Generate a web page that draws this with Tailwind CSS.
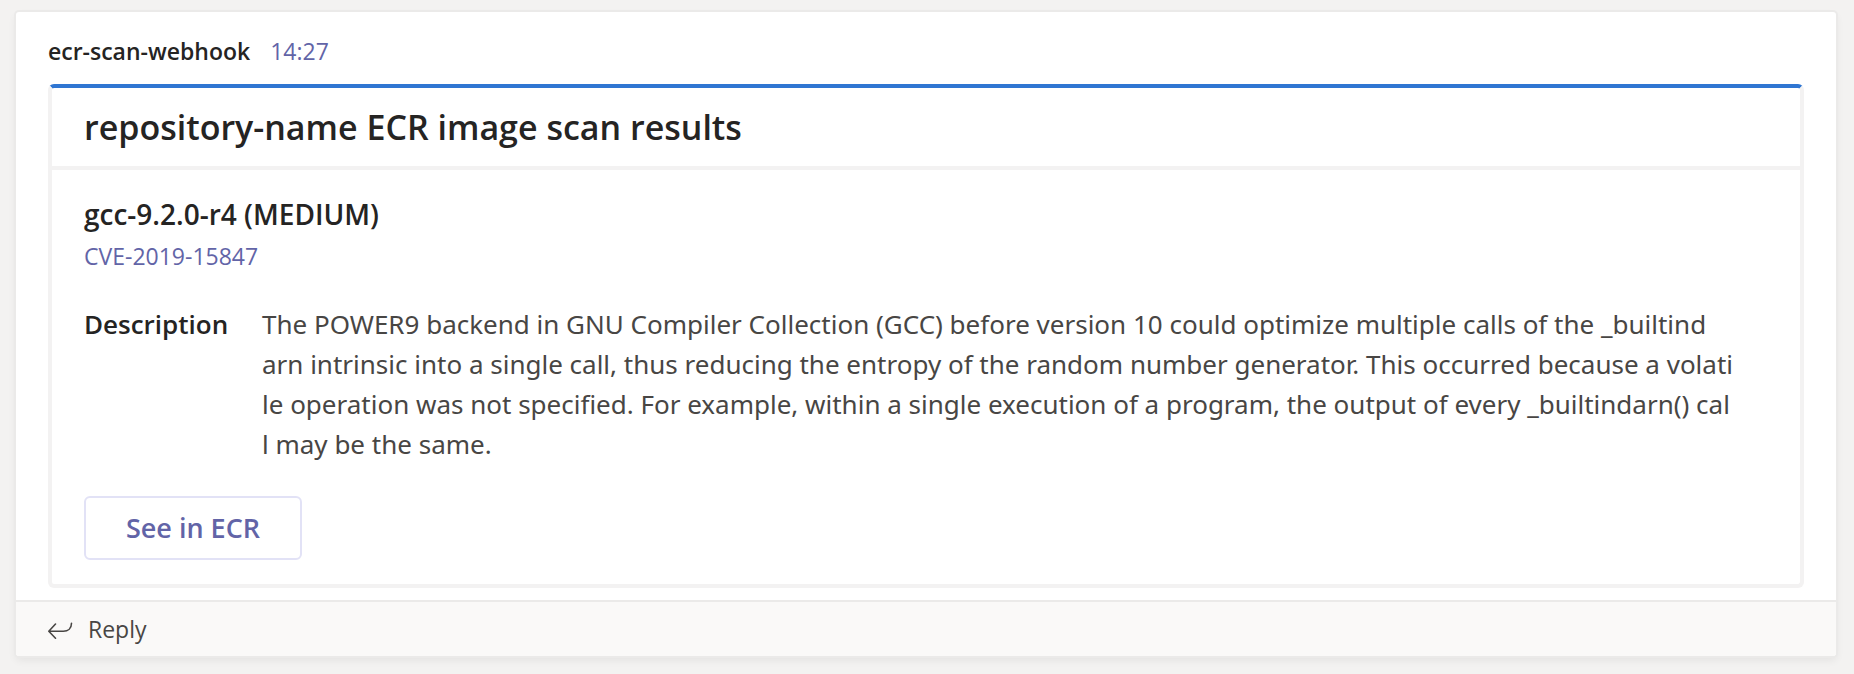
<!DOCTYPE html>
<html lang="en">
<head>
<meta charset="utf-8">
<title>ecr-scan-webhook</title>
<script src="https://cdn.jsdelivr.net/npm/@tailwindcss/browser@4"></script>
</head>
<body class="min-h-screen bg-[#f3f2f1] pt-3 pr-[18px] pb-[18px] pl-4 font-['Open_Sans','Noto_Sans',sans-serif] text-[#252423]">
<article class="rounded-[3px] bg-white shadow-[0_0_0_2px_#ebeae9,0_4px_8px_rgba(0,0,0,0.07)]">
  <div class="px-8 pb-3">
    <header class="flex h-[72px] items-center gap-5 pt-1.5 text-[23px] leading-8">
      <span class="font-semibold">ecr-scan-webhook</span>
      <time class="text-[#6264a7]">14:27</time>
    </header>
    <section class="rounded-md border-4 border-[#f3f2f2] border-t-[#2f76d2]">
      <h1 class="border-b-4 border-[#f3f2f2] px-8 pt-4 pb-4 text-[34px] leading-[46px] font-semibold">repository-name ECR image scan results</h1>
      <div class="px-8 pt-6 pb-6">
        <h2 class="text-[28px] leading-10 font-semibold">gcc-9.2.0-r4 (MEDIUM)</h2>
        <a href="#" class="block h-11 w-fit pt-0.5 text-[23px] leading-10 text-[#6264a7]">CVE-2019-15847</a>
        <dl class="mt-[26px] flex gap-8 text-[26px] leading-10">
          <dt class="w-[146px] shrink-0 font-semibold">Description</dt>
          <dd class="font-['Noto_Sans',sans-serif] whitespace-nowrap text-[#484644]">The POWER9 backend in GNU Compiler Collection (GCC) before version 10 could optimize multiple calls of the _builtind<br>arn intrinsic into a single call, thus reducing the entropy of the random number generator. This occurred because a volati<br>le operation was not specified. For example, within a single execution of a program, the output of every _builtindarn() cal<br>l may be the same.</dd>
        </dl>
        <button type="button" class="mt-8 block h-16 w-[218px] rounded-md border-2 border-[#e2e2f6] text-[27px] font-semibold text-[#6264a7]">See in ECR</button>
      </div>
    </section>
  </div>
  <button type="button" class="flex h-14 w-full items-center gap-[15px] rounded-b-[3px] border-t-2 border-[#ebeae9] bg-[#faf9f8] px-8 text-[23px] text-[#484644]">
    <svg class="mt-1 h-[18px] w-[25px]" viewBox="0 0 25 18" fill="none" stroke="currentColor" stroke-width="1.6" stroke-linecap="round" stroke-linejoin="round" aria-hidden="true"><path d="M7.500 2 .8 9.200l6.700 7M.8 9.200h14.500c4.700 0 8.200-3 8.200-8"/></svg>
    <span>Reply</span>
  </button>
</article>
</body>
</html>
